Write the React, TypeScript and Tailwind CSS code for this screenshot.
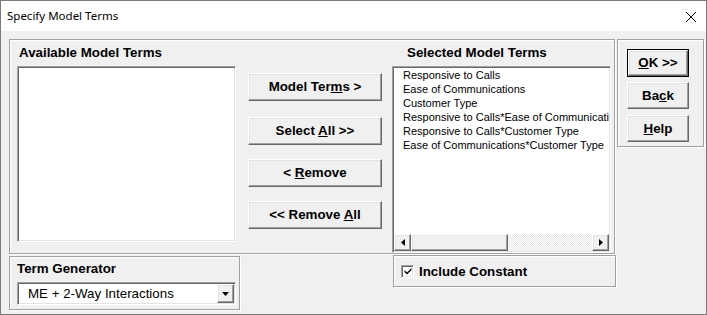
import React from "react";

function Raised({ children, className = "" }: { children?: React.ReactNode; className?: string }) {
  return (
    <div
      className={
        "flex items-center justify-center bg-[#f0f0f0] border border-t-white border-l-white border-r-[#696969] border-b-[#696969] shadow-[inset_-1px_-1px_0_#a0a0a0,inset_1px_1px_0_#e3e3e3] " +
        className
      }
    >
      {children}
    </div>
  );
}

function Btn({ children, className = "" }: { children: React.ReactNode; className?: string }) {
  return (
    <Raised className={"text-[13.33px] font-bold text-black leading-none " + className}>
      <span>{children}</span>
    </Raised>
  );
}

function Frame({ children, className = "" }: { children?: React.ReactNode; className?: string }) {
  return (
    <div className={"border border-[#a0a0a0] shadow-[inset_1px_1px_0_#fff,1px_1px_0_#fff] " + className}>
      {children}
    </div>
  );
}

function Sunken({ children, className = "" }: { children?: React.ReactNode; className?: string }) {
  return (
    <div
      className={
        "bg-white border border-t-[#a0a0a0] border-l-[#a0a0a0] border-r-white border-b-white shadow-[inset_1px_1px_0_#696969,inset_-1px_-1px_0_#e3e3e3] " +
        className
      }
    >
      {children}
    </div>
  );
}

const items = [
  "Responsive to Calls",
  "Ease of Communications",
  "Customer Type",
  "Responsive to Calls*Ease of Communications",
  "Responsive to Calls*Customer Type",
  "Ease of Communications*Customer Type",
];

export default function App() {
  return (
    <div className="w-[707px] h-[315px] flex flex-col border border-[#7a7a7a] bg-[#f0f0f0] font-['Liberation_Sans',Arial,sans-serif] text-black overflow-hidden">
      {/* Title bar */}
      <div className="h-[30px] shrink-0 bg-white flex items-center justify-between pl-[6px] pr-[9px]">
        <span className="font-['Noto_Sans','Open_Sans',sans-serif] text-[11.5px] text-black">Specify Model Terms</span>
        <svg width="12" height="12" viewBox="0 0 12 12" className="mt-[1px]">
          <path d="M1 1 L11 11 M11 1 L1 11" stroke="#000" strokeWidth="1" fill="none" />
        </svg>
      </div>

      {/* Body */}
      <div className="flex-1 pl-[8px] pt-[8px]">
        <div className="flex items-start">
          {/* Main frame */}
          <Frame className="w-[606px] h-[215px] flex items-start">
            {/* Left column */}
            <div className="ml-[7px] w-[219px] flex flex-col">
              <div className="mt-[5px] pl-[2px] h-[15px] leading-[15px] text-[13.33px] font-bold whitespace-nowrap">
                Available Model Terms
              </div>
              <Sunken className="mt-[6px] h-[176px]" />
            </div>

            {/* Buttons column */}
            <div className="ml-[12px] w-[134px] mt-[33px] flex flex-col">
              <Btn className="h-[28px]">
                Model Ter<u>m</u>s &gt;
              </Btn>
              <Btn className="h-[28px] mt-[16px]">
                Select <u>A</u>ll &gt;&gt;
              </Btn>
              <Btn className="h-[28px] mt-[14px]">
                &lt; <u>R</u>emove
              </Btn>
              <Btn className="h-[28px] mt-[14px]">
                &lt;&lt; Remove <u>A</u>ll
              </Btn>
            </div>

            {/* Right column */}
            <div className="ml-[10px] w-[219px] flex flex-col">
              <div className="mt-[5px] pl-[15px] h-[15px] leading-[15px] text-[13.33px] font-bold whitespace-nowrap">
                Selected Model Terms
              </div>
              <Sunken className="mt-[6px] h-[187px] flex flex-col p-[1px]">
                <div className="flex-1 overflow-hidden pl-[9px] text-[11px] leading-[14px]">
                  {items.map((t) => (
                    <div key={t} className="whitespace-nowrap">
                      {t}
                    </div>
                  ))}
                </div>
                <div className="h-[17px] flex shrink-0">
                  <Raised className="w-[17px] h-[17px] shrink-0">
                    <svg width="4" height="7" viewBox="0 0 4 7">
                      <path d="M4 0 L0 3.5 L4 7 Z" fill="#000" />
                    </svg>
                  </Raised>
                  <Raised className="w-[97px] h-[17px] shrink-0" />
                  <div className="flex-1 h-[17px] bg-[repeating-conic-gradient(#ffffff_0%_25%,#e6e6e6_0%_50%)] bg-[length:2px_2px]" />
                  <Raised className="w-[17px] h-[17px] shrink-0">
                    <svg width="4" height="7" viewBox="0 0 4 7">
                      <path d="M0 0 L4 3.5 L0 7 Z" fill="#000" />
                    </svg>
                  </Raised>
                </div>
              </Sunken>
            </div>
          </Frame>

          {/* Right frame */}
          <Frame className="ml-[2px] w-[87px] h-[108px] flex flex-col">
            <div className="ml-[9px] mt-[9px] w-[62px] h-[28px] border border-black">
              <Btn className="w-full h-full">
                <u>O</u>K &gt;&gt;
              </Btn>
            </div>
            <Btn className="ml-[9px] mt-[5px] w-[62px] h-[27px]">
              Ba<u>c</u>k
            </Btn>
            <Btn className="ml-[9px] mt-[6px] w-[62px] h-[27px]">
              <u>H</u>elp
            </Btn>
          </Frame>
        </div>

        <div className="flex items-start mt-[1px]">
          {/* Term generator */}
          <Frame className="mt-[1px] w-[231px] h-[54px] flex flex-col">
            <div className="ml-[7px] mt-[4px] h-[15px] leading-[15px] text-[13.33px] font-bold whitespace-nowrap">
              Term Generator
            </div>
            <Sunken className="ml-[7px] mt-[6px] w-[219px] h-[23px] flex items-center p-[1px]">
              <div className="flex-1 pl-[9px] text-[13.33px] leading-none whitespace-nowrap">
                ME + 2-Way Interactions
              </div>
              <Raised className="w-[17px] h-full shrink-0">
                <svg width="7" height="4" viewBox="0 0 7 4">
                  <path d="M0 0 L7 0 L3.5 4 Z" fill="#000" />
                </svg>
              </Raised>
            </Sunken>
          </Frame>

          {/* Include constant */}
          <Frame className="ml-[153px] w-[223px] h-[32px] flex items-center">
            <div className="ml-[7px] w-[13px] h-[13px] shrink-0 bg-white border border-t-[#a0a0a0] border-l-[#a0a0a0] border-r-white border-b-white shadow-[inset_1px_1px_0_#696969,inset_-1px_-1px_0_#e3e3e3] flex items-center justify-center">
              <svg width="8" height="8" viewBox="0 0 8 8">
                <path d="M0.5 3 L0.5 5 L3 7.5 L7.5 3 L7.5 1 L3 5.5 Z" fill="#000" />
              </svg>
            </div>
            <div className="ml-[5px] h-[15px] leading-[15px] text-[13.33px] font-bold whitespace-nowrap">
              Include Constant
            </div>
          </Frame>
        </div>
      </div>
    </div>
  );
}
